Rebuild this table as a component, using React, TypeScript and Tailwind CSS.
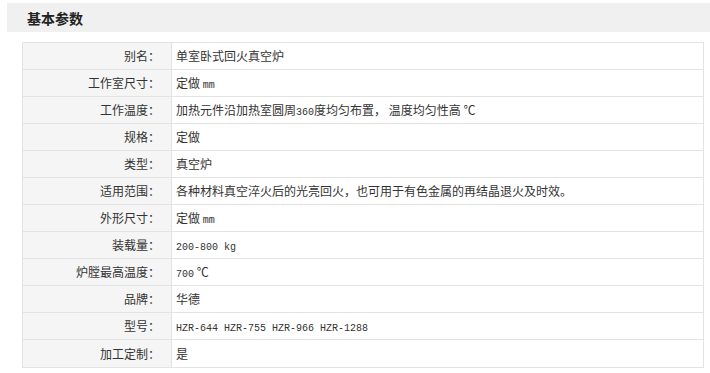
import React from 'react';

const M = ({ children }: { children: React.ReactNode }) => (
  <span className="font-['Liberation_Mono',monospace] text-[10px]">{children}</span>
);

const App: React.FC = () => {
  const rows: { label: string; value: React.ReactNode }[] = [
    { label: '别名', value: '单室卧式回火真空炉' },
    { label: '工作室尺寸', value: <>定做 <M>mm</M></> },
    { label: '工作温度', value: <>加热元件沿加热室圆周<M>360</M>度均匀布置， 温度均匀性高 ℃</> },
    { label: '规格', value: '定做' },
    { label: '类型', value: '真空炉' },
    { label: '适用范围', value: '各种材料真空淬火后的光亮回火，也可用于有色金属的再结晶退火及时效。' },
    { label: '外形尺寸', value: <>定做 <M>mm</M></> },
    { label: '装载量', value: <M>200-800 kg</M> },
    { label: '炉膛最高温度', value: <><M>700</M> ℃</> },
    { label: '品牌', value: '华德' },
    { label: '型号', value: <M>HZR-644 HZR-755 HZR-966 HZR-1288</M> },
    { label: '加工定制', value: '是' },
  ];

  return (
    <div className="w-[710px] h-[373px] bg-white text-[#333] font-['Noto_Sans_CJK_SC',sans-serif] overflow-hidden pt-[3px]">
      {/* header band */}
      <div className="ml-[7px] h-[29px] bg-[#f0f0f0] flex items-center pl-[20px]">
        <h2 className="text-[14px] font-bold text-[#222] leading-none">基本参数</h2>
      </div>

      <div className="ml-[22px] mt-[10px] w-[682px] border border-[#e3e3e3]">
        {rows.map((row, i) => (
          <div
            key={i}
            className={`flex h-[27px] text-[12px] ${i < rows.length - 1 ? 'border-b border-[#e3e3e3]' : ''}`}
          >
            <div className="w-[149px] shrink-0 bg-[#f5f5f5] border-r border-[#e3e3e3] flex items-center justify-end pr-[11px]">
              <span>{row.label}：</span>
            </div>
            <div className="flex items-center pl-[4px] whitespace-pre">
              <span>{row.value}</span>
            </div>
          </div>
        ))}
      </div>
    </div>
  );
};

export default App;
